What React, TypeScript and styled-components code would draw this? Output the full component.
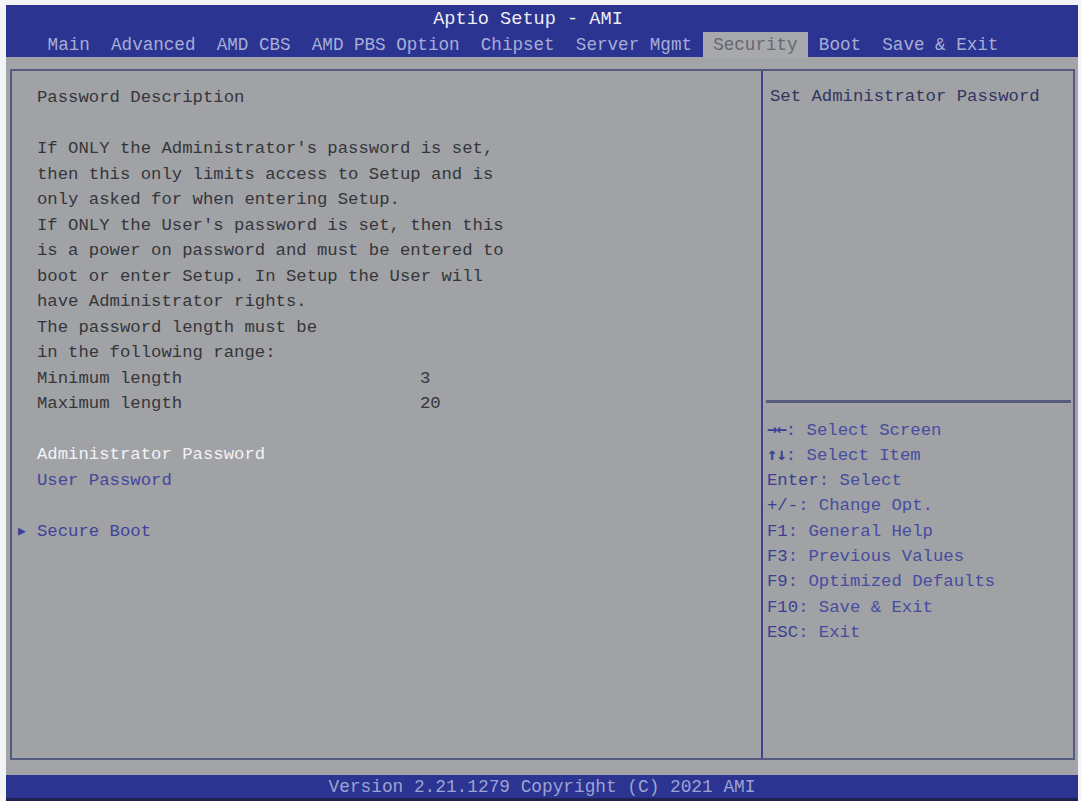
import React from 'react';
import styled, { createGlobalStyle } from 'styled-components';

const GlobalStyle = createGlobalStyle`
  html, body {
    margin: 0;
    padding: 0;
    background: #f4f4f6;
  }
  body {
    font-family: 'Liberation Mono', 'DejaVu Sans Mono', monospace;
  }
`;

const BLUE = '#2b3491';
const GRAY = '#a2a4a8';

const Screen = styled.div`
  width: 1072px;
  height: 796px;
  margin: 5px 0 0 6px;
  display: flex;
  flex-direction: column;
  background: ${GRAY};
`;

const Header = styled.header`
  height: 52px;
  background: ${BLUE};
  display: flex;
  flex-direction: column;
`;

const Title = styled.div`
  height: 27px;
  line-height: 30px;
  text-align: center;
  padding-right: 28px;
  color: #ececf4;
  font-size: 18.6px;
`;

const TabRow = styled.nav`
  height: 25px;
  display: flex;
  padding-left: 31px;
`;

const Tab = styled.span<{ $active?: boolean }>`
  padding: 0 10.6px;
  line-height: 26px;
  font-size: 17.6px;
  white-space: pre;
  color: ${p => (p.$active ? '#66686f' : '#a8add6')};
  background: ${p => (p.$active ? '#a7a9ad' : 'transparent')};
`;

const Body = styled.main`
  flex: 1;
  padding: 12px 3px 15px 4px;
  display: flex;
`;

const Frame = styled.div`
  flex: 1;
  display: grid;
  grid-template-columns: 751px 1fr;
  border: 2px solid #565a7e;
  background: #a0a2a6;
`;

const LeftPane = styled.section`
  padding: 14px 0 0 25px;
  border-right: 2px solid #3f4490;
  font-size: 17.3px;
  line-height: 25.5px;
  color: #35363a;
`;

const Line = styled.div<{ $tone?: 'white' | 'blue' }>`
  height: 25.5px;
  white-space: pre;
  color: ${p => (p.$tone === 'white' ? '#f3f3f5' : p.$tone === 'blue' ? '#43489a' : 'inherit')};
`;

const ValueRow = styled.div`
  height: 25.5px;
  display: grid;
  grid-template-columns: 383px auto;
`;

const SubMenu = styled.div`
  height: 25.5px;
  display: flex;
  align-items: center;
  margin-left: -21px;
  color: #3f449a;
`;

const Arrow = styled.span`
  box-sizing: border-box;
  width: 21px;
  padding-left: 2px;
  font-size: 13px;
  color: #3a40a0;
`;

const RightPane = styled.aside`
  display: grid;
  grid-template-rows: 332px 1fr;
  font-size: 17.3px;
  line-height: 25.5px;
`;

const HelpTop = styled.div`
  padding: 13px 0 0 4px;
  color: #33355f;
  border-bottom: 3px solid #575b7c;
  margin: 0 2px 0 3px;
`;

const HelpList = styled.div`
  padding: 14px 0 0 4px;
  color: #474ca0;
`;

const HelpLine = styled.div`
  height: 25.4px;
  white-space: pre;
`;

const Key = styled.span<{ $glyph?: boolean }>`
  color: #3b3f93;
  font-family: ${p => (p.$glyph ? "'DejaVu Sans Mono', monospace" : 'inherit')};
  font-weight: ${p => (p.$glyph ? 700 : 400)};
  letter-spacing: ${p => (p.$glyph ? '-1px' : '0')};
`;

const Footer = styled.footer`
  height: 23px;
  background: ${BLUE};
  border-bottom: 3px solid #1e2350;
  text-align: center;
  line-height: 24px;
  font-size: 17.8px;
  color: #9ea3d2;
`;

const tabs = ['Main', 'Advanced', 'AMD CBS', 'AMD PBS Option', 'Chipset', 'Server Mgmt', 'Security', 'Boot', 'Save & Exit'];

const description = [
  'Password Description',
  '',
  "If ONLY the Administrator's password is set,",
  'then this only limits access to Setup and is',
  'only asked for when entering Setup.',
  "If ONLY the User's password is set, then this",
  'is a power on password and must be entered to',
  'boot or enter Setup. In Setup the User will',
  'have Administrator rights.',
  'The password length must be',
  'in the following range:',
];

const help: [string, string, boolean][] = [
  ['→←', ': Select Screen', true],
  ['↑↓', ': Select Item', true],
  ['Enter', ': Select', false],
  ['+/-', ': Change Opt.', false],
  ['F1', ': General Help', false],
  ['F3', ': Previous Values', false],
  ['F9', ': Optimized Defaults', false],
  ['F10', ': Save & Exit', false],
  ['ESC', ': Exit', false],
];

export default function App() {
  return (
    <>
      <GlobalStyle />
      <Screen>
        <Header>
          <Title>Aptio Setup - AMI</Title>
          <TabRow>
            {tabs.map(t => (
              <Tab key={t} $active={t === 'Security'}>{t}</Tab>
            ))}
          </TabRow>
        </Header>
        <Body>
          <Frame>
            <LeftPane>
              {description.map((l, i) => (
                <Line key={i}>{l}</Line>
              ))}
              <ValueRow>
                <span>Minimum length</span>
                <span>3</span>
              </ValueRow>
              <ValueRow>
                <span>Maximum length</span>
                <span>20</span>
              </ValueRow>
              <Line />
              <Line $tone="white">Administrator Password</Line>
              <Line $tone="blue">User Password</Line>
              <Line />
              <SubMenu>
                <Arrow>▶</Arrow>
                Secure Boot
              </SubMenu>
            </LeftPane>
            <RightPane>
              <HelpTop>Set Administrator Password</HelpTop>
              <HelpList>
                {help.map(([k, v, glyph]) => (
                  <HelpLine key={k}>
                    <Key $glyph={glyph}>{k}</Key>
                    {v}
                  </HelpLine>
                ))}
              </HelpList>
            </RightPane>
          </Frame>
        </Body>
        <Footer>Version 2.21.1279 Copyright (C) 2021 AMI</Footer>
      </Screen>
    </>
  );
}
